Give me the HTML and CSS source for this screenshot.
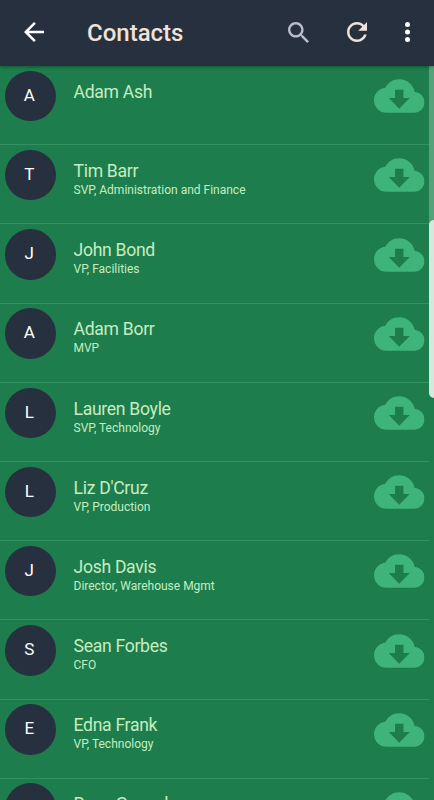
FILE: index.html
```html
<!DOCTYPE html>
<html lang="en">
<head>
	<meta charset="utf-8">
	<title>Contacts</title>
	<link rel="stylesheet" href="styles.css">
</head>
<body>

	<!-- shared download icon -->
	<svg width="0" height="0" class="defs">
		<symbol id="cloud" viewBox="0 4 24 16">
			<path d="M19.35 10.04C18.67 6.59 15.64 4 12 4 9.11 4 6.6 5.64 5.35 8.04 2.34 8.36 0 10.91 0 14c0 3.31 2.69 6 6 6h13c2.76 0 5-2.24 5-5 0-2.64-2.05-4.78-4.65-4.96zM17 13l-5 5-5-5h3V9h4v4h3z"/>
		</symbol>
	</svg>

	<header class="toolbar">
		<svg class="back" viewBox="4 4 16 16"><path d="M20 11H7.83l5.59-5.59L12 4l-8 8 8 8 1.41-1.41L7.83 13H20z"/></svg>
		<h1>Contacts</h1>
		<svg class="search" viewBox="3 3 17.5 17.5"><path d="M15.5 14h-.79l-.28-.27C15.41 12.59 16 11.11 16 9.5 16 5.91 13.09 3 9.5 3S3 5.91 3 9.5 5.91 16 9.5 16c1.61 0 3.09-.59 4.23-1.57l.27.28v.79l5 4.99L20.49 19zm-6 0C7.01 14 5 11.99 5 9.5S7.01 5 9.5 5 14 7.01 14 9.5 11.99 14 9.5 14z"/></svg>
		<svg class="refresh" viewBox="4 4 16 16"><path d="M17.65 6.35C16.2 4.9 14.21 4 12 4c-4.42 0-7.99 3.58-7.99 8s3.57 8 7.99 8c3.73 0 6.84-2.55 7.73-6h-2.08c-.82 2.33-3.04 4-5.65 4-3.31 0-6-2.69-6-6s2.69-6 6-6c1.66 0 3.14.69 4.22 1.78L13 11h7V4z"/></svg>
		<svg class="more" viewBox="10 4 4 16"><circle cx="12" cy="6" r="2"/><circle cx="12" cy="12" r="2"/><circle cx="12" cy="18" r="2"/></svg>
	</header>

	<div class="content">
		<ul class="contacts">
			<li>
				<span class="avatar">A</span>
				<div class="info"><h2>Adam Ash</h2></div>
				<svg class="cloud"><use href="#cloud"/></svg>
			</li>
			<li>
				<span class="avatar">T</span>
				<div class="info"><h2>Tim Barr</h2><p>SVP, Administration and Finance</p></div>
				<svg class="cloud"><use href="#cloud"/></svg>
			</li>
			<li>
				<span class="avatar">J</span>
				<div class="info"><h2>John Bond</h2><p>VP, Facilities</p></div>
				<svg class="cloud"><use href="#cloud"/></svg>
			</li>
			<li>
				<span class="avatar">A</span>
				<div class="info"><h2>Adam Borr</h2><p>MVP</p></div>
				<svg class="cloud"><use href="#cloud"/></svg>
			</li>
			<li>
				<span class="avatar">L</span>
				<div class="info"><h2>Lauren Boyle</h2><p>SVP, Technology</p></div>
				<svg class="cloud"><use href="#cloud"/></svg>
			</li>
			<li>
				<span class="avatar">L</span>
				<div class="info"><h2>Liz D'Cruz</h2><p>VP, Production</p></div>
				<svg class="cloud"><use href="#cloud"/></svg>
			</li>
			<li>
				<span class="avatar">J</span>
				<div class="info"><h2>Josh Davis</h2><p>Director, Warehouse Mgmt</p></div>
				<svg class="cloud"><use href="#cloud"/></svg>
			</li>
			<li>
				<span class="avatar">S</span>
				<div class="info"><h2>Sean Forbes</h2><p>CFO</p></div>
				<svg class="cloud"><use href="#cloud"/></svg>
			</li>
			<li>
				<span class="avatar">E</span>
				<div class="info"><h2>Edna Frank</h2><p>VP, Technology</p></div>
				<svg class="cloud"><use href="#cloud"/></svg>
			</li>
			<li>
				<span class="avatar">R</span>
				<div class="info"><h2>Rose Gonzalez</h2></div>
				<svg class="cloud"><use href="#cloud"/></svg>
			</li>
		</ul>
		<div class="fade"></div>
		<div class="thumb"></div>
	</div>

</body>
</html>
```

FILE: styles.css
```css
* { box-sizing: border-box; }

body {
	margin: 0;
	height: 800px;
	overflow: hidden;
	display: flex;
	flex-direction: column;
	background: #1d7d4c;
	font-family: Roboto, "Liberation Sans", sans-serif;
}

.defs { position: absolute; }

/* top bar */
.toolbar {
	flex: none;
	display: flex;
	align-items: center;
	height: 66px;
	padding: 0 24px 2px 24px;
	background: #27303f;
	box-shadow: 0 1px 3px rgba(0, 0, 0, .35);
	z-index: 1;
}
.toolbar svg { flex: none; height: 20px; }
.toolbar h1 {
	flex: 1;
	margin: 2px 0 0 43px;
	font-size: 24px;
	font-weight: 500;
	line-height: 30px;
	color: #f0e2d8;
}
.toolbar .search { width: 21px; height: 21px; fill: #b9bdcb; }
.back { width: 20px; fill: #fff; }
.refresh { width: 20px; margin-left: 38px; fill: #f0e2d8; }
.more { width: 5px; margin-left: 38px; fill: #fff; }

/* list */
.content {
	position: relative;
	flex: 1;
	min-height: 0;
	overflow: hidden;
}
.contacts {
	margin: 0 5px 0 0;
	padding: 0;
	list-style: none;
}
.contacts li {
	display: flex;
	align-items: flex-start;
	height: 79.2px;
	padding: 4.8px 5px 0 5px;
	border-bottom: 1px solid #35905f;
}
.avatar {
	flex: none;
	width: 50.5px;
	height: 50.5px;
	padding-right: 2px;
	border-radius: 50%;
	background: #27303f;
	color: #fff;
	font-size: 17px;
	line-height: 49px;
	text-align: center;
}
.info {
	flex: 1;
	margin: 10px 0 0 18px;
	color: #c5edc0;
}
.info h2 {
	margin: 0;
	font-size: 17.6px;
	letter-spacing: -.3px;
	font-weight: 400;
	line-height: 22px;
}
.info p {
	margin: 0;
	font-size: 12px;
	line-height: 16.6px;
}
.cloud {
	flex: none;
	width: 50.5px;
	height: 34px;
	margin-top: 8.5px;
	fill: #3fb47a;
	overflow: visible;
}

/* scrollbar */
.fade {
	position: absolute;
	top: 0;
	right: 0;
	width: 5px;
	height: 160px;
	background: #56a37b;
}
.thumb {
	position: absolute;
	top: 154px;
	right: 0;
	width: 5px;
	height: 178px;
	border-radius: 5px 0 0 5px;
	background: #d5e8dc;
}
```
